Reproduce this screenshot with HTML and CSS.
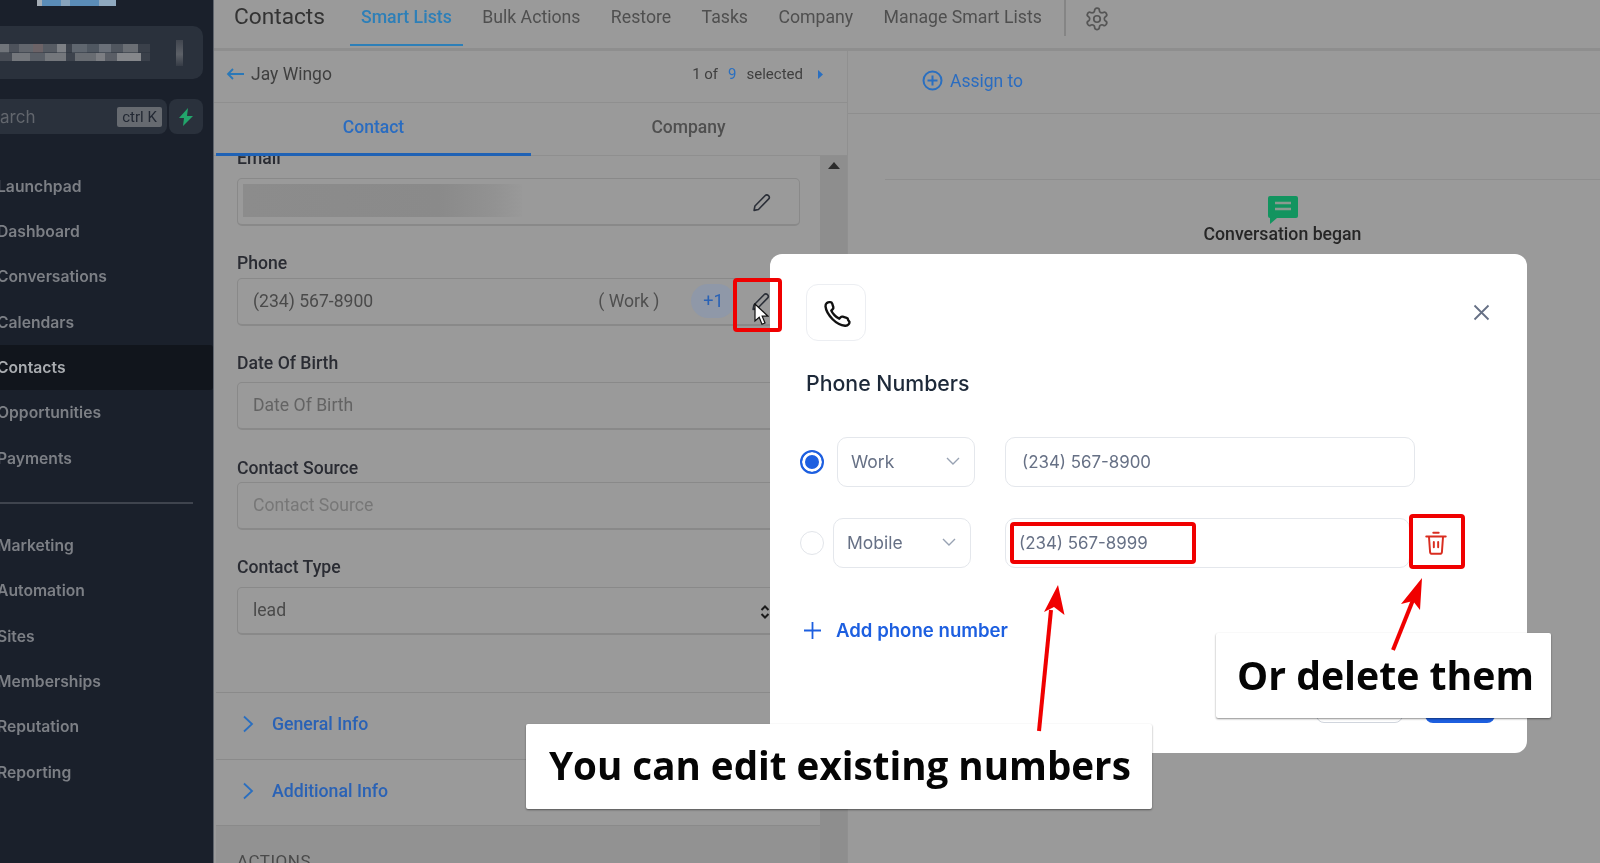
FILE: index.html
```html
<!DOCTYPE html>
<html lang="en">
<head>
<meta charset="utf-8">
<title>Contacts</title>
<link rel="stylesheet" href="styles.css">
</head>
<body>
<div class="app">
  <aside class="sidebar">
    <div class="logo-wrap"><div class="logo"></div></div>
    <div class="account"><div class="mosaic"></div><div class="mosaic-end"></div></div>
    <div class="search-row">
      <div class="search"><span class="search-text">arch</span><span class="kbd">ctrl K</span></div>
      <div class="bolt"><svg width="16" height="18" viewBox="0 0 16 18"><path d="M10 0 1 10h5l-1 8 10-10H9z" fill="#22a56b"/></svg></div>
    </div>
    <nav class="nav">
      <a class="nav-item">Launchpad</a>
      <a class="nav-item">Dashboard</a>
      <a class="nav-item">Conversations</a>
      <a class="nav-item">Calendars</a>
      <a class="nav-item active">Contacts</a>
      <a class="nav-item">Opportunities</a>
      <a class="nav-item">Payments</a>
      <div class="nav-rule"></div>
      <a class="nav-item">Marketing</a>
      <a class="nav-item">Automation</a>
      <a class="nav-item">Sites</a>
      <a class="nav-item">Memberships</a>
      <a class="nav-item">Reputation</a>
      <a class="nav-item">Reporting</a>
    </nav>
  </aside>

  <main class="main">
    <header class="topbar">
      <h1 class="page-title">Contacts</h1>
      <div class="tabs">
        <a class="tab current">Smart Lists</a>
        <a class="tab">Bulk Actions</a>
        <a class="tab">Restore</a>
        <a class="tab">Tasks</a>
        <a class="tab">Company</a>
        <a class="tab">Manage Smart Lists</a>
      </div>
      <div class="top-rule"></div>
      <svg class="gear" width="26" height="26" viewBox="0 0 24 24" fill="none" stroke="#555" stroke-width="1.6" stroke-linecap="round" stroke-linejoin="round"><path d="M12.2 2h-.4a2 2 0 0 0-2 2v.2a2 2 0 0 1-1 1.7l-.4.2a2 2 0 0 1-2 0l-.2-.1a2 2 0 0 0-2.7.7l-.2.4a2 2 0 0 0 .7 2.7l.2.1a2 2 0 0 1 1 1.7v.5a2 2 0 0 1-1 1.7l-.2.1a2 2 0 0 0-.7 2.7l.2.4a2 2 0 0 0 2.7.7l.2-.1a2 2 0 0 1 2 0l.4.2a2 2 0 0 1 1 1.7v.2a2 2 0 0 0 2 2h.4a2 2 0 0 0 2-2v-.2a2 2 0 0 1 1-1.7l.4-.2a2 2 0 0 1 2 0l.2.1a2 2 0 0 0 2.7-.7l.2-.4a2 2 0 0 0-.7-2.7l-.2-.1a2 2 0 0 1-1-1.7v-.5a2 2 0 0 1 1-1.7l.2-.1a2 2 0 0 0 .7-2.7l-.2-.4a2 2 0 0 0-2.7-.7l-.2.1a2 2 0 0 1-2 0l-.4-.2a2 2 0 0 1-1-1.7V4a2 2 0 0 0-2-2z"/><circle cx="12" cy="12" r="3"/></svg>
    </header>

    <div class="workspace">
      <section class="detail">
        <div class="detail-head">
          <div class="back">
            <svg width="19" height="12" viewBox="0 0 19 12" fill="none" stroke="#2a78b8" stroke-width="1.8"><path d="M18 6H2M7 1 2 6l5 5"/></svg>
            <span>Jay Wingo</span>
          </div>
          <div class="pager">
            <span>1 of</span><span class="pager-num">9</span><span>selected</span>
            <svg width="5" height="9" viewBox="0 0 5 9"><path d="M0 0l5 4.500-5 4.500z" fill="#2a6fc0"/></svg>
          </div>
        </div>
        <div class="detail-tabs">
          <a class="detail-tab on">Contact</a>
          <a class="detail-tab">Company</a>
        </div>
        <div class="detail-body">
          <div class="form-scroll">
            <div class="fields">
              <div class="field first">
                <label class="label">Email</label>
                <div class="input"><div class="smear"></div>
                  <svg class="pencil" width="21" height="21" viewBox="0 0 24 24" fill="none" stroke="#2b2f38" stroke-width="1.8" stroke-linejoin="round"><path d="M3.5 21l1-5L16 4.200a2.800 2.800 0 0 1 4 4L8.500 20z"/></svg>
                </div>
              </div>
              <div class="field phone">
                <label class="label">Phone</label>
                <div class="input">
                  <span class="value">(234) 567-8900</span>
                  <span class="phone-kind">( Work )</span>
                  <span class="plus-pill">+1</span>
                  <svg class="pencil" width="21" height="21" viewBox="0 0 24 24" fill="none" stroke="#2b2f38" stroke-width="1.8" stroke-linejoin="round"><path d="M3.500 21l1-5L16 4.200a2.800 2.800 0 0 1 4 4L8.500 20z"/></svg>
                </div>
              </div>
              <div class="field dob">
                <label class="label">Date Of Birth</label>
                <div class="input"><span class="placeholder">Date Of Birth</span></div>
              </div>
              <div class="field source">
                <label class="label">Contact Source</label>
                <div class="input"><span class="placeholder light">Contact Source</span></div>
              </div>
              <div class="field type">
                <label class="label">Contact Type</label>
                <div class="input"><span class="value">lead</span>
                  <svg class="sort" width="10" height="16" viewBox="0 0 10 16" fill="none" stroke="#1b1b1b" stroke-width="2"><path d="M1.500 6 5 2.500 8.500 6M1.500 10 5 13.500 8.500 10"/></svg>
                </div>
              </div>
            </div>
            <div class="acc">
              <svg width="12" height="18" viewBox="0 0 12 18" fill="none" stroke="#2a6fc0" stroke-width="1.800"><path d="M2 1.500 10 9l-8 7.500"/></svg>
              <span>General Info</span>
            </div>
            <div class="acc">
              <svg width="12" height="18" viewBox="0 0 12 18" fill="none" stroke="#2a6fc0" stroke-width="1.800"><path d="M2 1.500 10 9l-8 7.500"/></svg>
              <span>Additional Info</span>
            </div>
            <div class="actions-title">ACTIONS</div>
          </div>
          <div class="scrollbar"><svg width="12" height="7" viewBox="0 0 12 7"><path d="M0 7l6-7 6 7z" fill="#2c2c2c"/></svg></div>
        </div>
      </section>

      <section class="activity">
        <div class="assign">
          <svg width="21" height="21" viewBox="0 0 21 21" fill="none" stroke="#2a6fc0" stroke-width="2"><circle cx="10.500" cy="10.500" r="9"/><path d="M10.500 5.500v10M5.500 10.500h10"/></svg>
          <span>Assign to</span>
        </div>
        <div class="timeline">
          <svg width="30" height="28" viewBox="0 0 30 28"><path d="M2 0h26a2 2 0 0 1 2 2v18a2 2 0 0 1-2 2H9l-7 6V22a2 2 0 0 1-2-2V2a2 2 0 0 1 2-2z" fill="#12945f"/><path d="M7 7h16M7 13h16" stroke="#8a9a90" stroke-width="2.500"/></svg>
          <div class="began">Conversation began</div>
        </div>
      </section>
    </div>
  </main>

  <div class="modal">
    <div class="modal-top">
      <div class="icon-box">
        <svg width="34" height="34" viewBox="0 0 24 24" fill="none" stroke="#111" stroke-width="1.700" stroke-linejoin="round"><path d="M21.500 18.300c0 .6-.2 1.200-.6 1.700-.6.700-1.500 1.100-2.500 1-3-.3-6.200-2-8.800-4.600-2.600-2.600-4.700-6-5-9 -.1-1 .3-1.900 1-2.500.5-.4 1.100-.6 1.700-.6h.7c.6 0 1.100.4 1.300 1l.8 2.600c.1.500 0 1-.4 1.400l-1 1c.7 1.800 3.300 4.700 5.600 5.700l1-1c.4-.4.900-.5 1.400-.4l2.800.9c.6.200 1 .7 1 1.300z"/></svg>
      </div>
      <svg class="close" width="17" height="17" viewBox="0 0 17 17" fill="none" stroke="#667085" stroke-width="1.800"><path d="M1.500 1.500l14 14M15.500 1.500l-14 14"/></svg>
    </div>
    <h2 class="modal-title">Phone Numbers</h2>
    <div class="num-row one">
      <span class="radio checked"></span>
      <div class="m-select"><span>Work</span><svg width="14" height="8" viewBox="0 0 14 8" fill="none" stroke="#98a2b3" stroke-width="1.400"><path d="M1 1l6 6 6-6"/></svg></div>
      <div class="m-input"><span>(234) 567-8900</span></div>
    </div>
    <div class="num-row two">
      <span class="radio"></span>
      <div class="m-select"><span>Mobile</span><svg width="14" height="8" viewBox="0 0 14 8" fill="none" stroke="#98a2b3" stroke-width="1.400"><path d="M1 1l6 6 6-6"/></svg></div>
      <div class="m-input"><span>(234) 567-8999</span></div>
      <svg class="trash" width="26" height="26" viewBox="0 0 24 24" fill="none" stroke="#d92d20" stroke-width="1.800" stroke-linecap="round" stroke-linejoin="round"><path d="M9.500 2.500h5M3 6h18M5.500 6l1 14a2 2 0 0 0 2 2h7a2 2 0 0 0 2-2l1-14M10 11v5M14 11v5"/></svg>
    </div>
    <a class="add-number">
      <svg width="17" height="17" viewBox="0 0 17 17" fill="none" stroke="#1d5fe0" stroke-width="1.800"><path d="M8.500 0v17M0 8.500h17"/></svg>
      <span>Add phone number</span>
    </a>
    <div class="modal-foot">
      <span class="btn-cancel"></span>
      <span class="btn-save"></span>
    </div>
  </div>

  <div class="callout edit">You can edit existing numbers</div>
  <div class="callout del">Or delete them</div>
  <div class="hl hl-pencil"></div>
  <div class="hl hl-number"></div>
  <div class="hl hl-trash"></div>
  <svg class="cursor" width="15" height="23" viewBox="0 0 15 23"><path d="M1 1v17l4.200-3.800 2.800 7 3-1.200-2.800-6.800H14z" fill="#fff" stroke="#111" stroke-width="1.200"/></svg>
  <svg class="arrows" width="1600" height="863" viewBox="0 0 1600 863">
    <path d="M1039 731 1051 610" stroke="#f00000" stroke-width="4" fill="none"/>
    <path d="M1058 585 1064.500 615 1054 607 1044 612z" fill="#f00000"/>
    <path d="M1393 650 1413 600" stroke="#f00000" stroke-width="4" fill="none"/>
    <path d="M1422 578 1420 610 1413 601 1401 604z" fill="#f00000"/>
  </svg>
</div>
</body>
</html>
```

FILE: styles.css
```css
* { box-sizing: border-box; }
html, body { margin: 0; height: 100%; overflow: hidden; background: #999; }
.app {
  position: relative;
  width: 1600px;
  height: 863px;
  display: flex;
  overflow: hidden;
  font-family: Roboto, "Liberation Sans", sans-serif;
  background: #9a9a9a;
  filter: blur(0.45px);
}

/* sidebar */
.sidebar { width: 214px; flex: none; background: #1a202b; border-right: 1px solid #5f646c; font-family: Inter, Roboto, sans-serif; }
.logo-wrap { height: 26px; padding-left: 37px; }
.logo { width: 79px; height: 6px; background: linear-gradient(90deg, #a5adb5 0 6%, #5b8db8 6% 30%, #88a4bc 30% 42%, #5b8db8 42% 78%, #8fa9bf 78% 100%); }
.account { width: 203px; height: 53px; background: #2a313c; border-radius: 0 10px 10px 0; display: flex; align-items: center; }
.mosaic {
  width: 150px; height: 17px;
  background:
    linear-gradient(90deg, #70747a 0 6%, #4d525b 6% 13%, #62666d 13% 22%, #6c6367 22% 29%, #565b63 29% 38%, #7d8085 38% 44%, #3c424c 44% 48%, #5f666f 48% 58%, #4f5761 58% 66%, #6a7079 66% 74%, #50565f 74% 82%, #6a6e74 82% 92%, #3a404a 92% 100%) top / 100% 50% no-repeat,
    linear-gradient(90deg, #474c55 0 8%, #74777c 8% 20%, #5a5f67 20% 30%, #74777c 30% 44%, #3d434d 44% 50%, #686c72 50% 64%, #7c7e83 64% 70%, #5a5e66 70% 78%, #85878b 78% 94%, #3a404a 94% 100%) bottom / 100% 50% no-repeat;
}
.mosaic-end { width: 7px; height: 26px; margin-left: 26px; background: linear-gradient(180deg, #41464f, #5c6067 55%, #363c46); }
.search-row { display: flex; gap: 2px; margin-top: 20px; width: 203px; height: 35px; }
.search { flex: 1; background: #2a313c; border-radius: 0 8px 8px 0; display: flex; align-items: center; justify-content: space-between; padding-right: 5px; }
.search-text { font-size: 17px; color: #62666d; }
.kbd { width: 45px; height: 20px; background: #666a70; border-radius: 2px; color: #222833; font-family: Roboto, sans-serif; font-size: 15px; line-height: 20px; text-align: center; }
.bolt { width: 34px; background: #2a313c; border-radius: 8px; display: flex; align-items: center; justify-content: center; }
.nav { margin-top: 29.5px; }
.nav-item { display: flex; align-items: center; height: 45.35px; text-indent: -3px; font-size: 15.7px; font-weight: 600; color: #7c7f85; white-space: nowrap; overflow: hidden; }
.nav-item.active { background: #11151c; color: #a9acb0; border-radius: 0 3px 3px 0; }
.nav-rule { height: 2px; width: 193px; background: #3f444e; margin: 21px 0 19px; }

/* main */
.main { flex: 1; min-width: 0; display: flex; flex-direction: column; }
.topbar { height: 51px; flex: none; display: flex; align-items: flex-start; padding-left: 20px; border-bottom: 3px solid #8e8e8e; }
.page-title { margin: 0 25px 0 0; font-size: 22.7px; font-weight: 400; line-height: 33px; color: #333; width: 91px; white-space: nowrap; }
.tabs { display: flex; gap: 8.4px; height: 46px; }
.tab { padding: 0 11px; font-size: 17.7px; line-height: 35px; color: #4f4f4f; white-space: nowrap; }
.tab.current { color: #2d7fb8; font-weight: 500; border-bottom: 2px solid #2d7fb8; height: 46px; }
.top-rule { width: 2px; height: 36px; background: #858585; margin-left: 11px; }
.gear { margin: 6px 0 0 18px; }

.workspace { flex: 1; display: flex; min-height: 0; }
.detail { width: 634px; flex: none; display: flex; flex-direction: column; border-right: 1px solid #909090; }
.detail-head { height: 52px; flex: none; display: flex; align-items: center; justify-content: space-between; padding: 0 24px 5px 12px; border-bottom: 1px solid #8f8f8f; color: #3f3f3f; }
.back { display: flex; align-items: center; gap: 6px; font-size: 17.5px; }
.pager { display: flex; align-items: center; gap: 10px; font-size: 15px; }
.pager-num { color: #2a6fc0; }
.pager svg { margin-left: 5px; }
.detail-tabs { height: 53px; flex: none; display: flex; padding-left: 2px; border-bottom: 1px solid #8f8f8f; }
.detail-tab { width: 315px; text-align: center; font-size: 17.5px; line-height: 49px; color: #4f4f4f; font-weight: 500; }
.detail-tab.on { color: #2a6cc0; border-bottom: 3px solid #1f62b5; height: 53px; }

.detail-body { flex: 1; display: flex; min-height: 0; overflow: hidden; }
.form-scroll { flex: 1; min-width: 0; display: flex; flex-direction: column; padding-left: 2px; }
.fields { padding: 0 20px 0 21px; height: 536px; flex: none; }
.label { display: block; font-size: 17.6px; line-height: 20px; font-weight: 500; color: #2a2c33; }
.input { position: relative; height: 48px; border: 1px solid #898989; border-bottom-width: 2px; border-radius: 5px; display: flex; align-items: center; padding: 0 15px 2px; font-size: 17.6px; }
.field.first { margin-top: -8px; }
.field.first .input { margin-top: 10px; }
.field.phone { margin-top: 27px; }
.field.phone .input { margin-top: 5px; }
.field.dob { margin-top: 27px; }
.field.dob .input { margin-top: 9px; }
.field.source { margin-top: 28px; }
.field.source .input { margin-top: 4px; }
.field.type { margin-top: 27px; }
.field.type .input { margin-top: 10px; }
.smear { width: 279px; height: 33px; margin-left: -10px; background: linear-gradient(90deg, #8c8c8c, #8a8a8a 70%, #929292 90%, #999); }
.pencil { position: absolute; right: 27px; top: 13px; }
.value { color: #4a4a4a; }
.placeholder { color: #636363; }
.placeholder.light { color: #777; }
.phone-kind { margin-left: 225px; color: #4f4f4f; white-space: nowrap; }
.plus-pill { margin-left: 32px; flex: none; width: 44px; height: 34px; border-radius: 17px; background: #8f98a8; color: #2a62b5; font-size: 18px; line-height: 34px; text-align: center; }
.field.phone .pencil { right: 28px; top: 12px; }
.sort { position: absolute; left: 522px; top: 16px; }
.acc { height: 66.5px; flex: none; display: flex; align-items: center; gap: 18px; padding: 0 0 3px 26px; font-size: 17.7px; color: #2a62b5; font-weight: 500; border-top: 1px solid #8a8a8a; }
.actions-title { flex: 1; border-top: 1px solid #8a8a8a; background: #929292; padding: 25px 0 0 21px; font-size: 17px; line-height: 20px; letter-spacing: .5px; color: #4a4a4a; }
.scrollbar { width: 27px; flex: none; background: #8e8e8e; display: flex; justify-content: center; padding-top: 6px; align-items: flex-start; }

.activity { flex: 1; min-width: 0; }
.assign { height: 63px; display: flex; align-items: center; gap: 7px; padding: 0 0 3px 74px; font-size: 17.5px; color: #2a6cc0; border-bottom: 1px solid #8e8e8e; }
.timeline { margin: 65px 0 0 37px; border-top: 1px solid #8e8e8e; display: flex; flex-direction: column; align-items: center; padding: 16px 0 0 0; width: 795px; }
.began { font-size: 17.7px; font-weight: 500; color: #262626; line-height: 20px; white-space: nowrap; }

/* modal */
.modal { position: absolute; left: 770px; top: 254px; width: 757px; height: 499px; background: #fff; border-radius: 12px; font-family: Inter, Roboto, sans-serif; padding: 30px 36px 0; }
.modal-top { display: flex; justify-content: space-between; align-items: center; }
.icon-box { width: 60px; height: 57px; border: 1px solid #eceef2; border-radius: 12px; display: flex; align-items: center; justify-content: center; }
.close { margin-right: 1px; }
.modal-title { margin: 28px 0 0; font-size: 21.3px; line-height: 28px; font-weight: 500; color: #1d2939; }
.num-row { display: flex; align-items: center; height: 50px; }
.num-row.one { margin-top: 40px; }
.num-row.two { margin-top: 31px; }
.radio { width: 24px; height: 24px; border-radius: 50%; border: 1px solid #e2e5ea; flex: none; margin-left: -6px; }
.radio.checked { border: 2px solid #1d5fe0; box-shadow: inset 0 0 0 3px #fff; background: #1d5fe0; }
.m-select { height: 50px; width: 138px; border: 1px solid #e4e7ec; border-radius: 10px; display: flex; align-items: center; justify-content: space-between; padding: 0 14px 2px 13px; font-size: 17.5px; color: #667085; }
.m-input { height: 50px; border: 1px solid #e4e7ec; border-radius: 10px; display: flex; align-items: center; padding-left: 16px; font-size: 16.9px; color: #667085; }
.one .m-select { margin-left: 13px; }
.one .m-input { margin-left: 30px; width: 410px; }
.two .m-select { margin-left: 9px; }
.two .m-input { margin-left: 34px; width: 405px; padding-left: 13px; }
.trash { margin-left: 13px; }
.add-number { display: flex; align-items: center; gap: 15px; margin: 48px 0 0 -2px; height: 28px; font-size: 18.6px; font-weight: 600; color: #1d5fe0; }
.modal-foot { position: absolute; left: 546px; top: 429px; display: flex; gap: 22px; }
.btn-cancel { width: 87px; height: 40px; border: 1px solid #d0d5dd; border-radius: 8px; }
.btn-save { width: 70px; height: 40px; background: #1d5fe0; border-radius: 8px; }

/* tutorial annotations */
.callout { position: absolute; background: #fff; color: #050505; font-family: "Open Sans", "Noto Sans", sans-serif; font-weight: 700; line-height: 1; display: flex; align-items: center; box-shadow: 0 1px 2px rgba(0,0,0,.45); border-radius: 2px; white-space: nowrap; padding-bottom: 2px; }
.callout.edit { left: 526px; top: 724px; width: 626px; height: 85px; padding-left: 23px; font-size: 38.6px; }
.callout.del { left: 1216px; top: 633px; width: 335px; height: 85px; padding-left: 21px; font-size: 39.2px; }
.hl { position: absolute; border: 4px solid #f00000; border-radius: 4px; }
.hl-pencil { left: 733px; top: 278px; width: 49px; height: 54px; }
.hl-number { left: 1010px; top: 522px; width: 186px; height: 42px; }
.hl-trash { left: 1409px; top: 514px; width: 56px; height: 55px; }
.cursor { position: absolute; left: 754px; top: 303px; }
.arrows { position: absolute; left: 0; top: 0; }
```
